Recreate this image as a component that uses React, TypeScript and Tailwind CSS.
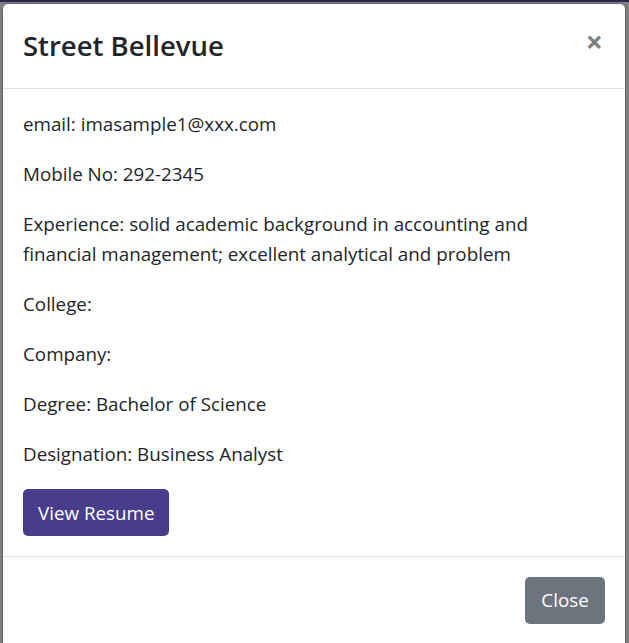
import React from "react";

export default function App() {
  const font = { fontFamily: '"Open Sans", "Noto Sans", Arial, sans-serif' };
  return (
    <div
      className="w-[629px] h-[643px] overflow-hidden bg-[#7f7f7f] border-t-2 border-[#2b2650] pt-[1px] pl-[2px] pr-[3px]"
      style={font}
    >
      <div className="bg-white border border-[#666] rounded-[6px] h-[700px] text-[#212529]">
        <div className="h-[85px] border-b border-[#dee2e6] flex items-start justify-between pl-[20px] pr-[22px]">
          <h4 className="text-[27.5px] font-semibold leading-none mt-[28px]">Street Bellevue</h4>
          <span className="text-[30px] font-bold text-[#808080] leading-none mt-[23px]">×</span>
        </div>
        <div className="p-[20px] text-[18.8px] leading-[30px]">
          <p className="mb-[20px]">email: imasample1@xxx.com</p>
          <p className="mb-[20px]">Mobile No: 292-2345</p>
          <p className="mb-[20px]">
            Experience: solid academic background in accounting and financial management; excellent analytical and problem
          </p>
          <p className="mb-[20px]">College:</p>
          <p className="mb-[20px]">Company:</p>
          <p className="mb-[20px]">Degree: Bachelor of Science</p>
          <p className="mb-[20px]">Designation: Business Analyst</p>
          <button className="h-[47px] px-[15px] bg-[#483d8b] text-white rounded-[5px] text-[18.8px]">
            View Resume
          </button>
        </div>
        <div className="border-t border-[#dee2e6] p-[20px] flex justify-end">
          <button className="h-[47px] w-[80px] bg-[#6c757d] text-white rounded-[5px] text-[18.8px]">
            Close
          </button>
        </div>
      </div>
    </div>
  );
}
